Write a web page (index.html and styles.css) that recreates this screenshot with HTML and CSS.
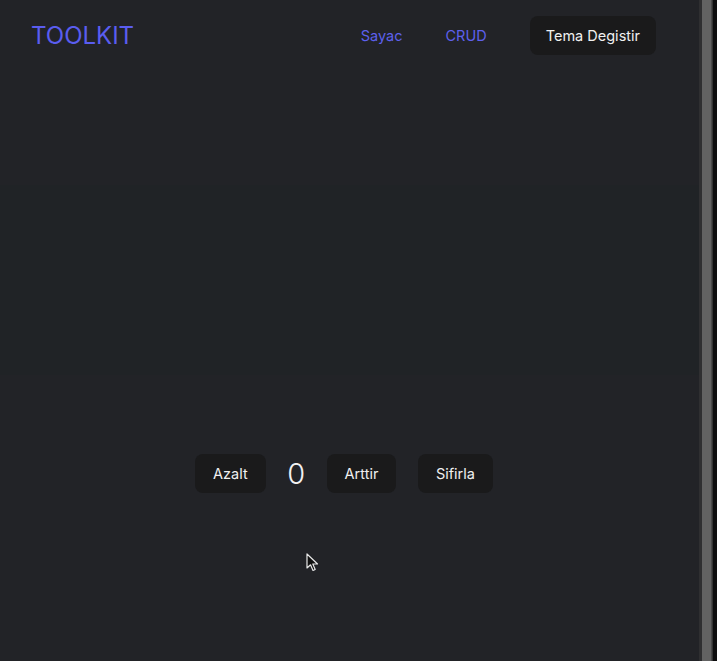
FILE: index.html
```html
<!DOCTYPE html>
<html lang="tr">
<head>
<meta charset="utf-8">
<title>Toolkit</title>
<link rel="stylesheet" href="styles.css">
</head>
<body>
<div class="window">
  <div class="app">
    <header class="topbar">
      <div class="logo">TOOLKIT</div>
      <nav class="nav">
        <a class="nav-link" href="#">Sayac</a>
        <a class="nav-link" href="#">CRUD</a>
        <button class="btn btn-theme">Tema Degistir</button>
      </nav>
    </header>
    <main class="main">
      <div class="counter">
        <button class="btn">Azalt</button>
        <span class="count">0</span>
        <button class="btn">Arttir</button>
        <button class="btn">Sifirla</button>
      </div>
    </main>
    <svg class="cursor" width="13" height="20" viewBox="0 0 13 20" aria-hidden="true">
      <path d="M1 1 L1 15 L4.5 11.8 L7 17.5 L9.2 16.5 L6.8 11 L11.5 11 Z" fill="#111" stroke="#e8e8e8" stroke-width="1.2" stroke-linejoin="round"/>
    </svg>
  </div>
  <div class="edge">
    <div class="edge-line"></div>
    <div class="edge-bar"></div>
    <div class="edge-dark"></div>
  </div>
</div>
</body>
</html>
```
FILE: styles.css
```css
* { box-sizing: border-box; }
html, body { margin: 0; height: 100%; }
body {
  background: #222327;
  font-family: Inter, "Noto Sans", "Liberation Sans", sans-serif;
  color: rgba(255,255,255,0.9);
  overflow: hidden;
}
.window {
  display: flex;
  height: 661px;
}
.app {
  position: relative;
  flex: 1;
  background:
    linear-gradient(to bottom, #222327 0, #222327 185px, #202326 185px, #202326 375px, #222327 375px);
}
.topbar {
  display: flex;
  align-items: center;
  justify-content: space-between;
  padding: 16px 43px 0 31px;
}
.logo {
  font-size: 24px;
  color: #5a5df0;
  line-height: 39px;
}
.nav {
  display: flex;
  align-items: center;
  gap: 43px;
}
.nav-link {
  color: #5d60ec;
  font-size: 14.5px;
  font-weight: 400;
  text-decoration: none;
}
.btn {
  height: 39px;
  padding: 0 17px;
  border: 1px solid transparent;
  border-radius: 8px;
  background: #1a1a1b;
  color: #f0f0f0;
  font-family: inherit;
  font-size: 14.5px;
  font-weight: 400;
  cursor: pointer;
}
.btn-theme { padding: 0 15px; }
.main {
  display: flex;
  justify-content: center;
  padding: 0 11px 0 0;
  margin-top: 399px;
}
.counter {
  display: flex;
  align-items: center;
  gap: 21.5px;
}
.count {
  font-size: 29px;
  font-weight: 300;
  color: #f2f2f2;
  line-height: 39px;
}
.cursor {
  position: absolute;
  left: 306px;
  top: 553px;
}
.edge {
  width: 18px;
  display: flex;
}
.edge-line { width: 3px; background: #2f2f31; }
.edge-bar { width: 10px; background: #626262; border-right: 1px solid #4a4a4a; }
.edge-dark { flex: 1; background: #0d0d0e; border-left: 1px solid #333; }
```
